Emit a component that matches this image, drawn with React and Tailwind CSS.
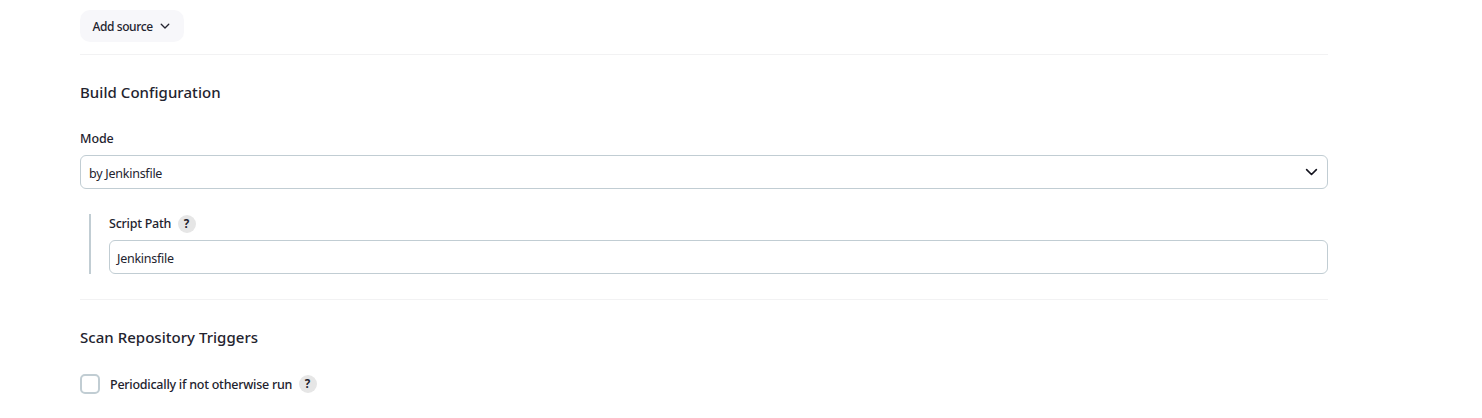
function Chevron({ className, strokeWidth }) {
  return (
    <svg className={className} viewBox="0 0 12 8" fill="none" stroke="currentColor" strokeWidth={strokeWidth} strokeLinecap="round" strokeLinejoin="round" aria-hidden="true">
      <path d="M1.5 1.5 6 6l4.5-4.5" />
    </svg>
  );
}

function Help() {
  return (
    <button type="button" className="flex size-[18px] shrink-0 items-center justify-center rounded-full bg-[#e6e6e6] pr-px text-[11.5px] leading-none font-bold tracking-normal">
      ?
    </button>
  );
}

export default function App() {
  return (
    <div className="h-[418px] overflow-hidden bg-white pt-2.5 pl-20 font-['Noto_Sans',sans-serif] text-[#23232e]">
      <main className="w-[1248px]">
        <button type="button" className="flex h-8 w-[104px] items-center rounded-[10px] bg-[#f7f7fa] pl-[12.5px] text-[12px] font-medium tracking-[-0.4px]">
          <span className="w-[60px] shrink-0 pt-0.5 text-left whitespace-nowrap">Add source</span>
          <Chevron className="ml-[7.5px] h-[6.7px] w-[10px] shrink-0" strokeWidth={1.6} />
        </button>

        <section className="mt-3 border-t border-[#f2f2f3]">
          <h2 className="mt-[25px] h-6 text-[15px] leading-6 font-medium tracking-[0.05px]">Build Configuration</h2>
          <div className="mt-[25px] h-5 text-[12.5px] leading-5 font-medium tracking-[-0.1px]">Mode</div>
          <div className="mt-1.5 flex h-[34px] items-center justify-between rounded-md border border-[#c1cdd3] pr-[9px] pl-2 text-[12.5px] tracking-[-0.25px]">
            <span className="pt-1">by Jenkinsfile</span>
            <Chevron className="h-[8.7px] w-[13px] text-[#14141f]" strokeWidth={1.5} />
          </div>
          <div className="mt-[25px] ml-[9px] h-[60px] border-l-2 border-[#c1cdd3] pl-[18px]">
            <div className="flex h-5 items-center text-[12.5px] font-medium tracking-[-0.25px]">
              <span className="w-[69px] whitespace-nowrap">Script Path</span>
              <Help />
            </div>
            <div className="mt-1.5 flex h-[34px] items-center rounded-md border border-[#c1cdd3] pl-[7px] text-[12.5px] tracking-[-0.25px]">
              <span className="pt-1">Jenkinsfile</span>
            </div>
          </div>
        </section>

        <section className="mt-[25px] border-t border-[#f2f2f3]">
          <h2 className="mt-[25px] h-6 text-[15px] leading-6 font-medium tracking-[0.03px]">Scan Repository Triggers</h2>
          <div className="mt-[25px] flex h-5 items-center text-[12.5px] font-medium tracking-[-0.25px]">
            <span role="checkbox" aria-checked="false" className="size-5 shrink-0 rounded-[5px] border-2 border-[#c1cdd3]" />
            <span className="ml-2.5 w-[189px] pt-0.5 whitespace-nowrap">Periodically if not otherwise run</span>
            <Help />
          </div>
        </section>
      </main>
    </div>
  );
}
